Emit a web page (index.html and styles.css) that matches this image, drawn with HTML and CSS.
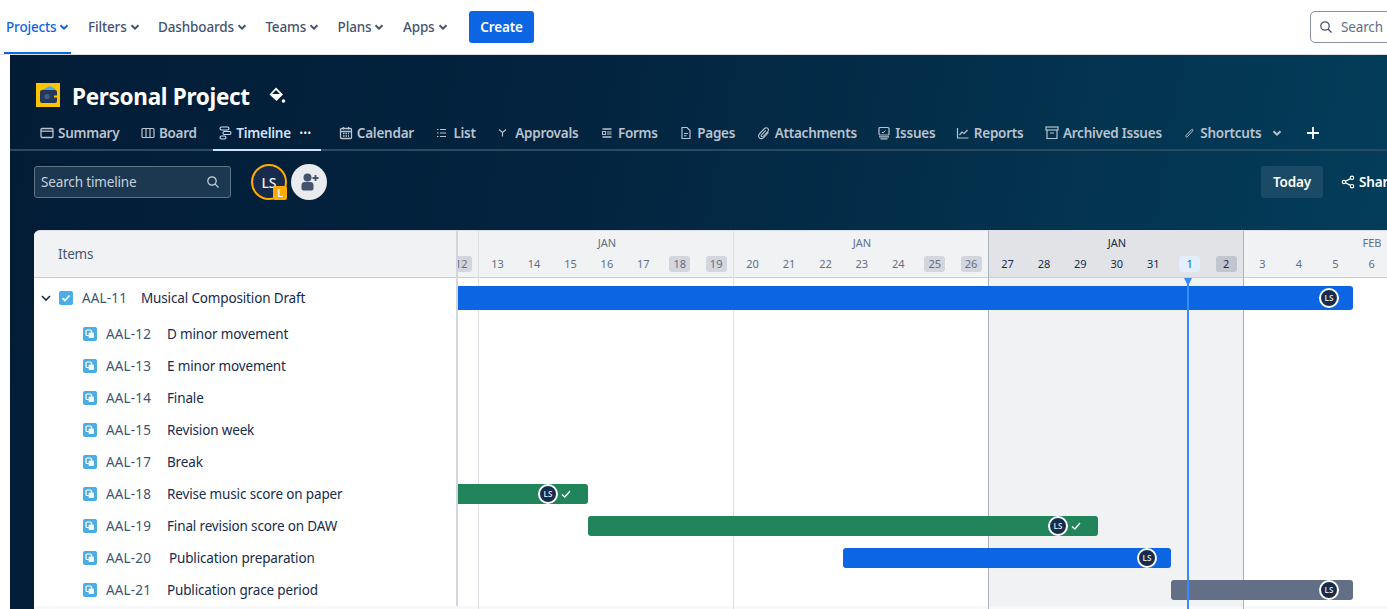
FILE: index.html
```html
<!DOCTYPE html>
<html lang="en">
<head>
    <meta charset="UTF-8">
    <title>Personal Project - Timeline</title>
    <link rel="stylesheet" href="styles.css">
</head>
<body>
    <svg class="sprites" width="0" height="0">
        <symbol id="caret" viewBox="0 0 10 10"><path d="M1.5 3.2 5 6.7l3.5-3.5" fill="none" stroke="currentColor" stroke-width="2"/></symbol>
        <symbol id="ls-check" viewBox="0 0 12 12"><path d="M2 6.5 4.8 9 10 3" fill="none" stroke="#fff" stroke-width="1.4"/></symbol>
        <symbol id="subtask" viewBox="0 0 14 14"><rect width="14" height="14" rx="2" fill="#4bade8"/><rect x="3" y="3" width="5.5" height="5.5" rx="1.2" fill="none" stroke="#fff" stroke-width="1.2"/><rect x="5.5" y="5.5" width="5.5" height="5.5" rx="1.2" fill="#fff"/></symbol>
    </svg>

    <header class="topnav">
        <a class="topnav-item active">Projects <svg class="caret"><use href="#caret"/></svg></a>
        <a class="topnav-item">Filters <svg class="caret"><use href="#caret"/></svg></a>
        <a class="topnav-item">Dashboards <svg class="caret"><use href="#caret"/></svg></a>
        <a class="topnav-item">Teams <svg class="caret"><use href="#caret"/></svg></a>
        <a class="topnav-item">Plans <svg class="caret"><use href="#caret"/></svg></a>
        <a class="topnav-item">Apps <svg class="caret"><use href="#caret"/></svg></a>
        <button class="create-btn">Create</button>
        <div class="global-search">
            <svg width="14" height="14" viewBox="0 0 14 14"><circle cx="6" cy="6" r="4.2" fill="none" stroke="#44546f" stroke-width="1.3"/><path d="m9.2 9.2 3.3 3.3" stroke="#44546f" stroke-width="1.3"/></svg>
            <span>Search</span>
        </div>
    </header>

    <main class="project">
        <div class="project-title">
            <svg class="project-logo" viewBox="0 0 24 24">
                <rect width="24" height="24" fill="#ffc400"/>
                <path d="M6 7 14 3l4 2 2 2v2H6z" fill="#4bade8"/>
                <rect x="4" y="7" width="17" height="13" rx="2" fill="#253858"/>
                <circle cx="11" cy="13.5" r="2.6" fill="#3e5f92"/>
                <rect x="18" y="12.5" width="3" height="2" fill="#ffc400"/>
            </svg>
            <h1>Personal Project</h1>
            <svg class="paint" width="18" height="18" viewBox="0 0 18 18"><path d="M8 1.5 15 8.5 8.5 15 1.5 8.5z" fill="#fff"/><path d="M8 4 11.800 8H4.200z" fill="#03203a"/><circle cx="15.5" cy="15" r="1.8" fill="#fff"/></svg>
        </div>

        <nav class="tabs">
            <a class="tab"><svg viewBox="0 0 14 14"><rect x="1" y="2.5" width="12" height="9" rx="1" fill="none" stroke="currentColor" stroke-width="1.3"/><path d="M1 5.2h12" stroke="currentColor" stroke-width="1.3"/></svg>Summary</a>
            <a class="tab"><svg viewBox="0 0 14 14"><rect x="1" y="2.5" width="12" height="9" rx="1" fill="none" stroke="currentColor" stroke-width="1.2"/><path d="M5 2.5v9M9 2.5v9" stroke="currentColor" stroke-width="1.2"/></svg>Board</a>
            <a class="tab selected"><svg viewBox="0 0 14 14"><rect x="2" y="1" width="9" height="3" rx="1.5" fill="none" stroke="currentColor" stroke-width="1.1"/><rect x="5" y="5.5" width="8" height="3" rx="1.5" fill="none" stroke="currentColor" stroke-width="1.1"/><rect x="2" y="10" width="6" height="3" rx="1.5" fill="none" stroke="currentColor" stroke-width="1.1"/></svg>Timeline<span class="dots">&#8226;&#8226;&#8226;</span></a>
            <a class="tab"><svg viewBox="0 0 14 14"><rect x="1.5" y="2.5" width="11" height="10" rx="1" fill="none" stroke="currentColor" stroke-width="1.3"/><path d="M1.5 5.5h11M4.5 1v2.5M9.5 1v2.5" stroke="currentColor" stroke-width="1.3"/><path d="M4 7.5h6M4 10h6" stroke="currentColor" stroke-width="1.3" stroke-dasharray="1.5 1"/></svg>Calendar</a>
            <a class="tab"><svg viewBox="0 0 14 14"><path d="M2 3.5h1.500M5 3.5h6M2 7h1.500M5 7h6M2 10.5h1.500M5 10.5h6" stroke="currentColor" stroke-width="1.1"/></svg>List</a>
            <a class="tab"><svg viewBox="0 0 14 14"><path d="M2 3.5 5.500 6.500 9 3.500M5.500 6.500v4" fill="none" stroke="currentColor" stroke-width="1.2"/></svg>Approvals</a>
            <a class="tab"><svg viewBox="0 0 14 14"><path d="M2.5 3h9M2.500 11h9" stroke="currentColor" stroke-width="1.4"/><path d="M2.500 5.500h3v3h-3zM7 6h4.500M7 8h4.500" fill="none" stroke="currentColor" stroke-width="1.1"/></svg>Forms</a>
            <a class="tab"><svg viewBox="0 0 14 14"><path d="M3 1.500h5l3 3v8H3z" fill="none" stroke="currentColor" stroke-width="1.2"/><path d="M5 7.500h4M5 9.800h2.500" stroke="currentColor" stroke-width="1.1"/></svg>Pages</a>
            <a class="tab snug"><svg viewBox="0 0 14 14"><path d="M11.500 6.500 7 11.500c-1.500 1.600-3.700 1.300-4.600.3C1.400 10.800 1.400 9 2.800 7.500l4.700-5c1-1 2.500-1 3.300-.1.900.9.800 2.200-.1 3.200L6.300 10.300c-.6.600-1.300.6-1.800.1s-.4-1.200.2-1.800L8.800 4.300" fill="none" stroke="currentColor" stroke-width="1.1"/></svg>Attachments</a>
            <a class="tab snug"><svg viewBox="0 0 14 14"><rect x="2" y="1.500" width="10" height="7.500" rx="1" fill="none" stroke="currentColor" stroke-width="1.2"/><path d="m5 6 1 1 2.500-2.500" fill="none" stroke="currentColor" stroke-width="1"/><path d="M2 10.800h10M3.500 12.800h7" stroke="currentColor" stroke-width="1.2"/></svg>Issues</a>
            <a class="tab"><svg viewBox="0 0 14 14"><path d="M1.500 2v10h11" fill="none" stroke="currentColor" stroke-width="1.2"/><path d="m3.500 9 2.500-3 2 1.500L11.500 4" fill="none" stroke="currentColor" stroke-width="1.2"/></svg>Reports</a>
            <a class="tab snug"><svg viewBox="0 0 14 14"><rect x="1" y="1" width="12" height="3" fill="none" stroke="currentColor" stroke-width="1.2"/><path d="M2 4v8.500h10V4M5 7h4" fill="none" stroke="currentColor" stroke-width="1.2"/></svg>Archived Issues</a>
            <a class="tab shortcuts"><svg viewBox="0 0 14 14"><path d="M9.500 3.500 4 9.500c-.8.900.5 2.100 1.300 1.300l5.500-6c.8-.9-.5-2.100-1.300-1.300z" fill="none" stroke="currentColor" stroke-width="1"/></svg>Shortcuts<svg class="caret small"><use href="#caret"/></svg></a>
            <a class="tab add"><svg viewBox="0 0 14 14"><path d="M7 1v12M1 7h12" stroke="#fff" stroke-width="1.8"/></svg></a>
        </nav>

        <div class="toolbar">
            <div class="timeline-search">
                <span>Search timeline</span>
                <svg width="14" height="14" viewBox="0 0 14 14"><circle cx="6" cy="6" r="4.2" fill="none" stroke="#c7d1db" stroke-width="1.2"/><path d="m9.200 9.200 3.300 3.300" stroke="#c7d1db" stroke-width="1.2"/></svg>
            </div>
            <div class="avatar-me">LS<span class="avatar-badge">L</span></div>
            <div class="avatar-add">
                <svg width="22" height="22" viewBox="0 0 22 22"><circle cx="9.500" cy="6.500" r="4" fill="#44546f"/><path d="M3.500 14c0-2 1.500-3 3-3h6c1.500 0 3 1 3 3v3.500c0 1-1 2-2 2h-8c-1 0-2-1-2-2z" fill="#44546f"/><path d="M17.500 4v6M14.500 7h6" stroke="#44546f" stroke-width="1.8"/></svg>
            </div>
            <button class="today-btn">Today</button>
            <div class="share">
                <svg width="14" height="14" viewBox="0 0 14 14"><circle cx="3" cy="7" r="1.7" fill="none" stroke="#fff" stroke-width="1.2"/><circle cx="11" cy="2.800" r="1.7" fill="none" stroke="#fff" stroke-width="1.2"/><circle cx="11" cy="11.200" r="1.7" fill="none" stroke="#fff" stroke-width="1.2"/><path d="m4.500 6.200 5-2.600M4.500 7.800l5 2.600" stroke="#fff" stroke-width="1.2"/></svg>
                <span>Share</span>
            </div>
        </div>

        <section class="board">
            <div class="items">
                <div class="items-head">Items</div>
                <div class="item parent">
                    <svg class="item-caret" width="12" height="12" viewBox="0 0 12 12"><path d="M2 4l4 4 4-4" fill="none" stroke="#172b4d" stroke-width="1.6"/></svg>
                    <svg class="issue-icon" viewBox="0 0 14 14"><rect width="14" height="14" rx="2" fill="#4bade8"/><path d="M3.500 7.200 6 9.500l4.500-5" fill="none" stroke="#fff" stroke-width="1.8"/></svg>
                    <span class="key">AAL-11</span><span class="summary">Musical Composition Draft</span>
                </div>
                <div class="item"><svg class="issue-icon"><use href="#subtask"/></svg><span class="key">AAL-12</span><span class="summary">D minor movement</span></div>
                <div class="item"><svg class="issue-icon"><use href="#subtask"/></svg><span class="key">AAL-13</span><span class="summary">E minor movement</span></div>
                <div class="item"><svg class="issue-icon"><use href="#subtask"/></svg><span class="key">AAL-14</span><span class="summary">Finale</span></div>
                <div class="item"><svg class="issue-icon"><use href="#subtask"/></svg><span class="key">AAL-15</span><span class="summary">Revision week</span></div>
                <div class="item"><svg class="issue-icon"><use href="#subtask"/></svg><span class="key">AAL-17</span><span class="summary">Break</span></div>
                <div class="item"><svg class="issue-icon"><use href="#subtask"/></svg><span class="key">AAL-18</span><span class="summary">Revise music score on paper</span></div>
                <div class="item"><svg class="issue-icon"><use href="#subtask"/></svg><span class="key">AAL-19</span><span class="summary">Final revision score on DAW</span></div>
                <div class="item"><svg class="issue-icon"><use href="#subtask"/></svg><span class="key">AAL-20</span><span class="summary wide">Publication preparation</span></div>
                <div class="item"><svg class="issue-icon"><use href="#subtask"/></svg><span class="key">AAL-21</span><span class="summary">Publication grace period</span></div>
            </div>

            <div class="chart">
                <div class="sprint-shade"></div>
                <div class="week-line" style="left:20px"></div>
                <div class="week-line" style="left:275px"></div>
                <div class="week-line dark" style="left:530px"></div>
                <div class="week-line dark" style="left:785px"></div>

                <div class="chart-head">
                    <div class="months">
                        <span class="month" style="left:149px">JAN</span>
                        <span class="month" style="left:404px">JAN</span>
                        <span class="month current" style="left:659px">JAN</span>
                        <span class="month" style="left:914px">FEB</span>
                    </div>
                    <div class="days">
                        <span class="day weekend">12</span><span class="day">13</span><span class="day">14</span><span class="day">15</span><span class="day">16</span><span class="day">17</span><span class="day weekend">18</span><span class="day weekend">19</span><span class="day">20</span><span class="day">21</span><span class="day">22</span><span class="day">23</span><span class="day">24</span><span class="day weekend">25</span><span class="day weekend">26</span><span class="day current">27</span><span class="day current">28</span><span class="day current">29</span><span class="day current">30</span><span class="day current">31</span><span class="day today">1</span><span class="day weekend current">2</span><span class="day">3</span><span class="day">4</span><span class="day">5</span><span class="day">6</span>
                    </div>
                </div>

                <div class="chart-row first"><div class="bar blue cut" style="margin-left:0;width:895px"><span class="bar-avatar">LS</span></div></div>
                <div class="chart-row"></div>
                <div class="chart-row"></div>
                <div class="chart-row"></div>
                <div class="chart-row"></div>
                <div class="chart-row"></div>
                <div class="chart-row"><div class="bar green cut" style="margin-left:0;width:130px"><span class="bar-avatar">LS</span><svg class="bar-check"><use href="#ls-check"/></svg></div></div>
                <div class="chart-row"><div class="bar green" style="margin-left:130px;width:510px"><span class="bar-avatar">LS</span><svg class="bar-check"><use href="#ls-check"/></svg></div></div>
                <div class="chart-row"><div class="bar blue" style="margin-left:385px;width:328px"><span class="bar-avatar">LS</span></div></div>
                <div class="chart-row"><div class="bar grey" style="margin-left:713px;width:182px"><span class="bar-avatar">LS</span></div></div>

                <div class="today-line"></div>
            </div>
        </section>
    </main>
</body>
</html>
```

FILE: styles.css
```css
* {
    margin: 0;
    padding: 0;
    box-sizing: border-box;
}

html, body {
    height: 100%;
    overflow: hidden;
}

body {
    font-family: "Noto Sans", "Open Sans", sans-serif;
    font-size: 13.5px;
    letter-spacing: -0.15px;
    color: #172b4d;
    background: #fff;
}

.sprites {
    position: absolute;
}

/* Top navigation */
.topnav {
    height: 55px;
    display: flex;
    align-items: center;
    border-bottom: 1px solid #dcdfe4;
    padding-left: 6px;
}

.topnav-item {
    display: flex;
    align-items: center;
    gap: 3px;
    height: 54px;
    margin-right: 18.5px;
    font-weight: 500;
    color: #44546f;
    position: relative;
}

.topnav-item.active {
    color: #0c66e4;
}

.topnav-item.active::after {
    content: "";
    position: absolute;
    left: -2px;
    right: -2px;
    bottom: 0;
    height: 2px;
    background: #0c66e4;
}

.caret {
    width: 10px;
    height: 10px;
}

.create-btn {
    width: 65px;
    height: 32px;
    margin-left: 3px;
    border: none;
    border-radius: 3px;
    background: #0c66e4;
    color: #fff;
    font: 600 13.5px "Noto Sans", sans-serif;
    letter-spacing: -0.15px;
}

.global-search {
    margin-left: auto;
    margin-right: -4px;
    width: 81px;
    height: 32px;
    display: flex;
    align-items: center;
    gap: 8px;
    padding-left: 8px;
    border: 1px solid #8590a2;
    border-radius: 5px;
    color: #626f86;
    overflow: hidden;
}

/* Project area */
.project {
    height: 554px;
    margin-left: 10px;
    display: flex;
    flex-direction: column;
    background: linear-gradient(100deg, #021c36 0%, #03243f 40%, #033f5c 100%);
    overflow: hidden;
}

.project-title {
    display: flex;
    align-items: center;
    height: 24px;
    margin: 28px 0 0 26px;
}

.project-logo {
    width: 24px;
    height: 24px;
}

.project-title h1 {
    margin: 2px 0 0 12px;
    font-size: 22.5px;
    font-weight: 700;
    color: #fff;
    letter-spacing: -0.3px;
}

.paint {
    margin-left: 18px;
}

.tabs {
    display: flex;
    align-items: center;
    height: 35px;
    margin-top: 9px;
    padding-left: 30px;
    border-bottom: 2px solid #2a4a60;
}

.tab {
    display: flex;
    align-items: center;
    gap: 4px;
    height: 33px;
    margin-right: 21.5px;
    font-weight: 600;
    letter-spacing: -0.25px;
    color: #b9c2ce;
    white-space: nowrap;
}

.tab.snug {
    margin-right: 20.5px;
}

.tab svg {
    width: 14px;
    height: 14px;
}

.tab.selected {
    color: #cfe1fd;
    position: relative;
    margin-right: 27px;
}

.tab.selected::after {
    content: "";
    position: absolute;
    left: -5px;
    right: -9px;
    bottom: -2px;
    height: 2px;
    background: #cfe1fd;
}

.dots {
    margin-left: 5px;
    font-size: 8px;
    letter-spacing: 1px;
    color: #fff;
}

.tab .caret.small {
    width: 10px;
    height: 10px;
    margin-left: 7px;
}

.tab.add {
    margin: 0 0 0 2px;
}

/* Toolbar */
.toolbar {
    display: flex;
    align-items: center;
    height: 36px;
    margin-top: 13px;
    padding-left: 24px;
}

.timeline-search {
    width: 197px;
    height: 32px;
    display: flex;
    align-items: center;
    justify-content: space-between;
    padding: 0 10px 0 6px;
    background: #1c3850;
    border: 1px solid #5d7486;
    border-radius: 3px;
    color: #c7d1db;
}

.avatar-me {
    width: 36px;
    height: 36px;
    margin-left: 20px;
    border: 2px solid #ffab00;
    border-radius: 50%;
    background: #172b4d;
    color: #f1f2f4;
    font-size: 14px;
    font-weight: 500;
    display: flex;
    align-items: center;
    justify-content: center;
    position: relative;
}

.avatar-badge {
    position: absolute;
    right: -2px;
    bottom: -2px;
    width: 14px;
    height: 14px;
    border-radius: 2px;
    background: #ffab00;
    color: #fff;
    font-size: 11px;
    line-height: 14px;
    text-align: center;
}

.avatar-add {
    width: 36px;
    height: 36px;
    margin-left: 4px;
    border-radius: 50%;
    background: #e9ebee;
    display: flex;
    align-items: center;
    justify-content: center;
}

.today-btn {
    width: 62px;
    height: 32px;
    margin-left: auto;
    border: none;
    border-radius: 3px;
    background: #1a4a66;
    color: #fff;
    font: 600 13.5px "Noto Sans", sans-serif;
    letter-spacing: -0.15px;
}

.share {
    display: flex;
    align-items: center;
    gap: 4px;
    width: 46px;
    margin-left: 18px;
    color: #fff;
    font-weight: 600;
    overflow: hidden;
    flex: none;
}

.share svg {
    flex: none;
}

/* Timeline board */
.board {
    display: flex;
    height: 379px;
    margin: 30px 0 0 24px;
    background: #fff;
    border-radius: 6px 0 0 0;
    border-top: 1px solid #dcdfe4;
    overflow: hidden;
    flex: none;
    position: relative;
}

/* scrollbar track along the bottom */
.board::after {
    content: "";
    position: absolute;
    left: 0;
    right: 0;
    bottom: 0;
    height: 3px;
    background: #f7f8f9;
    z-index: 1;
}

.items {
    width: 422px;
    flex: none;
}

.items-head {
    height: 47px;
    display: flex;
    align-items: center;
    padding-left: 24px;
    background: #f1f2f4;
    border-bottom: 1px solid #c9ced6;
    color: #44546f;
}

.item {
    height: 32px;
    display: flex;
    align-items: center;
    padding-left: 49px;
    color: #172b4d;
}

.item.parent {
    height: 40px;
    padding-left: 6px;
}

.item-caret {
    margin-right: 7px;
}

.issue-icon {
    width: 14px;
    height: 14px;
    flex: none;
    margin-right: 9px;
}

.key {
    width: 61px;
    color: #44546f;
    letter-spacing: 0.15px;
    white-space: nowrap;
}

.item.parent .key {
    width: 59px;
}

.summary {
    white-space: nowrap;
}

.summary.wide {
    margin-left: 2px;
}

.chart {
    position: relative;
    flex: 1;
    min-width: 0;
    border-left: 2px solid #d3d6dc;
    overflow: hidden;
}

.chart-head {
    height: 47px;
    position: relative;
    background: #f1f2f4;
    border-bottom: 1px solid #c9ced6;
}

.chart-head::before {
    content: "";
    position: absolute;
    left: 530px;
    width: 255px;
    top: 0;
    bottom: 0;
    background: #e1e3e7;
}

.months {
    height: 25px;
    position: relative;
}

.month {
    position: absolute;
    top: 4px;
    font-size: 11px;
    line-height: 16px;
    letter-spacing: 0;
    color: #626f86;
    width: 30px;
    margin-left: -15px;
    text-align: center;
}

.month.current {
    color: #172b4d;
}

.days {
    display: grid;
    grid-template-columns: repeat(26, 36.43px);
    margin-left: -15px;
    position: relative;
}

.day {
    justify-self: center;
    width: 21px;
    height: 16px;
    line-height: 16px;
    border-radius: 3px;
    font-size: 11px;
    letter-spacing: 0;
    text-align: center;
    color: #626f86;
}

.day.weekend {
    background: #d3d6dc;
}

.day.current {
    color: #172b4d;
}

.day.weekend.current {
    background: #c1c6cf;
}

.day.today {
    background: #e3effe;
    color: #0c66e4;
}

.sprint-shade {
    position: absolute;
    left: 530px;
    width: 255px;
    top: 0;
    bottom: 0;
    background: #f1f2f4;
}

.week-line {
    position: absolute;
    top: 0;
    bottom: 0;
    width: 1px;
    background: #dcdfe4;
    z-index: 2;
}

.week-line.dark {
    background: #abb2bf;
}

.chart-row {
    height: 32px;
    display: flex;
    align-items: center;
    position: relative;
    z-index: 3;
}

.chart-row.first {
    height: 40px;
}

.bar {
    height: 20px;
    flex: none;
    display: flex;
    align-items: center;
    justify-content: flex-end;
    border-radius: 3px;
    padding-right: 14px;
}

.bar.cut {
    border-radius: 0 3px 3px 0;
}

.chart-row.first .bar {
    height: 24px;
}

.bar.blue {
    background: #0c66e4;
}

.bar.green {
    background: #22845a;
    padding-right: 16px;
}

.bar.grey {
    background: #626f86;
}

.bar-avatar {
    width: 20px;
    height: 20px;
    border-radius: 50%;
    border: 2px solid #fff;
    background: #172b4d;
    color: #dfe1e6;
    font-size: 8px;
    font-weight: 600;
    letter-spacing: 0;
    line-height: 16px;
    text-align: center;
    flex: none;
}

.bar-check {
    width: 12px;
    height: 12px;
    margin-left: 2px;
}

.today-line {
    position: absolute;
    left: 729px;
    top: 47px;
    bottom: 0;
    width: 2px;
    background: #388bff;
    z-index: 4;
}

.today-line::before {
    content: "";
    position: absolute;
    left: -3px;
    top: 0;
    border-left: 4px solid transparent;
    border-right: 4px solid transparent;
    border-top: 8px solid #388bff;
}
```
